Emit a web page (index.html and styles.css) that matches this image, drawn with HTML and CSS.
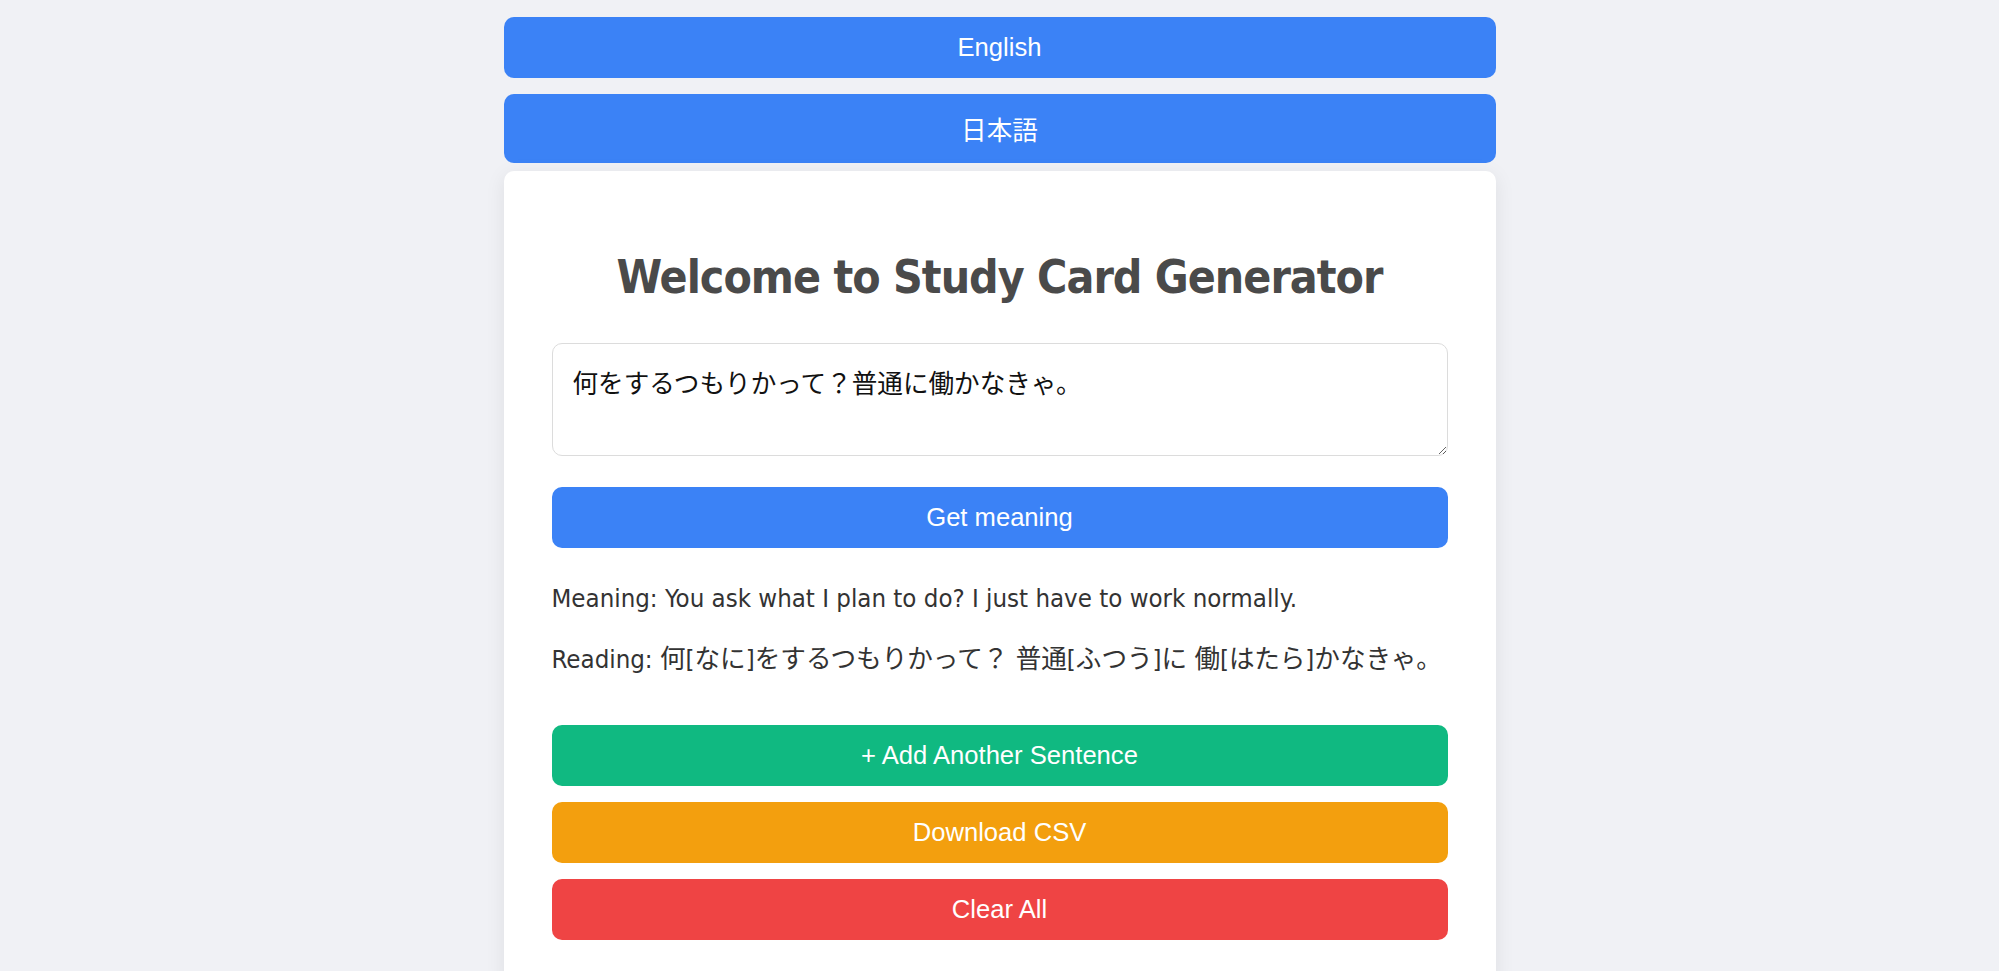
FILE: index.html
```html
<!DOCTYPE html>
<html lang="en">
<head>
<meta charset="utf-8">
<title>Study Card Generator</title>
<link rel="stylesheet" href="styles.css">
</head>
<body>
<div class="page">
  <button class="btn btn-blue lang">English</button>
  <button class="btn btn-blue lang">日本語</button>
  <div class="card">
    <h1 class="title">Welcome to Study Card Generator</h1>
    <textarea class="input">何をするつもりかって？普通に働かなきゃ。</textarea>
    <button class="btn btn-blue get">Get meaning</button>
    <div class="result">
      <p class="line">Meaning: You ask what I plan to do? I just have to work normally.</p>
      <p class="line">Reading: 何[なに]をするつもりかって？ 普通[ふつう]に 働[はたら]かなきゃ。</p>
    </div>
    <div class="actions">
      <button class="btn btn-green">+ Add Another Sentence</button>
      <button class="btn btn-orange">Download CSV</button>
      <button class="btn btn-red">Clear All</button>
    </div>
  </div>
</div>
</body>
</html>
```
FILE: styles.css
```css
html, body {
  margin: 0;
  padding: 0;
}
body {
  background: #f0f1f5;
  font-family: "DejaVu Sans Condensed", "Noto Sans CJK JP", sans-serif;
  color: #333;
}
.page {
  width: 992px;
  margin: 0 auto;
  padding-top: 17px;
  display: flex;
  flex-direction: column;
}
.btn {
  display: block;
  width: 100%;
  border: none;
  border-radius: 10px;
  padding: 16px 0;
  font-family: "Liberation Sans", "Noto Sans CJK JP", sans-serif;
  font-size: 25.6px;
  color: #fff;
  text-align: center;
  cursor: pointer;
}
.btn-blue { background: #3b82f6; }
.btn-green { background: #10b981; }
.btn-orange { background: #f39f0e; }
.btn-red { background: #ef4444; }
.lang { margin-bottom: 16px; }
.lang + .lang { margin-bottom: 8px; }
.card {
  background: #fff;
  border-radius: 10px;
  box-shadow: 0 4px 20px rgba(0, 0, 0, 0.08);
  padding: 48px;
  display: flex;
  flex-direction: column;
}
.title {
  margin: 31px 0 0;
  font-size: 46px;
  line-height: 54px;
  font-weight: bold;
  color: #4a4a4a;
  text-align: center;
  letter-spacing: -1px;
}
.input {
  margin-top: 39px;
  box-sizing: border-box;
  width: 100%;
  height: 113px;
  padding: 19px 20px;
  border: 1px solid #dcdcdc;
  border-radius: 10px;
  font-family: "Noto Sans CJK JP", sans-serif;
  font-size: 25.6px;
  color: #111;
  resize: vertical;
}
.get { margin-top: 31px; }
.result {
  margin-top: 31px;
  display: flex;
  flex-direction: column;
  gap: 23px;
}
.line {
  margin: 0;
  font-size: 25.6px;
  line-height: 38px;
  color: #333;
}
.actions {
  margin-top: 47px;
  display: flex;
  flex-direction: column;
  gap: 16px;
}
```
